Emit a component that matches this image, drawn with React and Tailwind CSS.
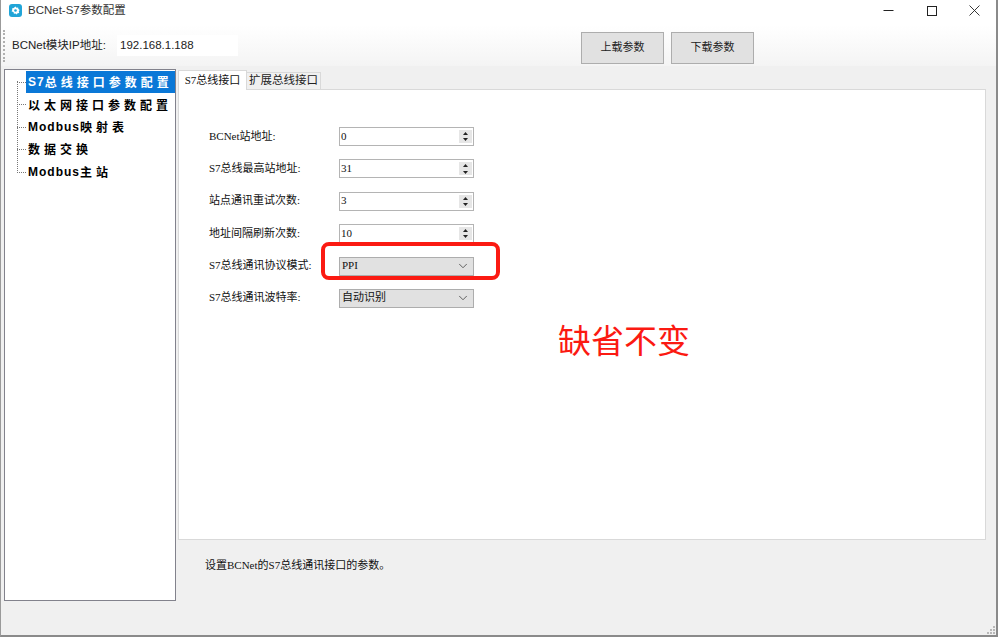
import React from "react";
import { ChevronDown } from "lucide-react";

const sans = "font-['Liberation_Sans','Noto_Sans_CJK_SC',sans-serif]";
const song = "font-['Liberation_Serif','Noto_Sans_CJK_SC',serif]";
const cjk = "font-['Noto_Sans_CJK_SC',sans-serif]";

const spinRows = [
  { label: "BCNet站地址:", value: "0" },
  { label: "S7总线最高站地址:", value: "31" },
  { label: "站点通讯重试次数:", value: "3" },
  { label: "地址间隔刷新次数:", value: "10" },
];

const selectRows = [
  { label: "S7总线通讯协议模式:", value: "PPI" },
  { label: "S7总线通讯波特率:", value: "自动识别" },
];

const treeItems = ["S7总线接口参数配置", "以太网接口参数配置", "Modbus映射表", "数据交换", "Modbus主站"];

const splitRuns = (text) => text.match(/[A-Za-z0-9]+|[^A-Za-z0-9]+/g);

const DialogText = ({ children }) => (
  <span className={`${song} block whitespace-nowrap pb-[1px] text-[11px] leading-none text-[#111]`}>{children}</span>
);

const TreeText = ({ text }) => (
  <>
    {splitRuns(text).map((run, i) =>
      /^[A-Za-z0-9]/.test(run) ? (
        <span key={i} className="font-['Liberation_Sans',sans-serif] text-[12px] tracking-[1px]">{run}</span>
      ) : (
        <span key={i} className={`${cjk} text-[12px] tracking-[4px]`}>{run}</span>
      )
    )}
  </>
);

const Arrow = ({ up }) => (
  <span className="flex h-[6.5px] w-[13px] items-center justify-center bg-[#e6e6e6]">
    <svg width="5" height="3" viewBox="0 0 5 3">
      <path d={up ? "M2.5 0L5 3H0z" : "M0 0h5L2.5 3z"} fill="#222" />
    </svg>
  </span>
);

const SpinBox = ({ value }) => (
  <div className="flex h-[19px] w-[135px] items-center justify-between border border-[#b4b4b4] bg-white pl-[1px] pr-[1px]">
    <DialogText>{value}</DialogText>
    <span className="flex flex-col">
      <Arrow up />
      <Arrow />
    </span>
  </div>
);

const SelectBox = ({ value }) => (
  <div className="flex h-[19px] w-[135px] items-center justify-between border border-[#adadad] bg-[#e1e1e1] pl-[2px] pr-[3px]">
    <DialogText>{value}</DialogText>
    <ChevronDown className="h-[14px] w-[14px] text-[#444]" strokeWidth={1.4} />
  </div>
);

const App = () => {
  return (
    <div className={`${sans} relative flex h-[638px] w-[1000px] flex-col overflow-hidden bg-white`}>
      <div className="flex h-[637px] w-[998px] flex-col border-b-2 border-r-2 border-[#8a8a8a] border-l border-l-[#9a9a9a]">
        {/* title bar */}
        <div className="flex h-[25px] shrink-0 items-center bg-white pb-[4px] pl-[8px]">
          <span className="flex h-[13px] w-[13px] items-center justify-center rounded-[3px] bg-[#21a5d8]">
            <svg width="9" height="9" viewBox="0 0 9 9">
              <path d="M4.5 0.5l1 1.3 1.6-.3.3 1.6 1.3.9-.9 1.3.4 1.6-1.6.3-1 1.3-1.1-1-1.6.3-.3-1.6L.5 5.3l.8-1.3L1 2.4l1.6-.3z" fill="#fff" />
              <circle cx="4.5" cy="4.5" r="1.3" fill="#21a5d8" />
            </svg>
          </span>
          <span className="ml-[6px] text-[11.5px] leading-none text-[#333]">BCNet-S7参数配置</span>
          <div className="ml-auto flex items-center pr-[16px]">
            <svg width="11" height="11" viewBox="0 0 11 11">
              <path d="M0.5 5.5h10" stroke="#222" />
            </svg>
            <svg className="ml-[33px]" width="10" height="10" viewBox="0 0 10 10">
              <rect x="0.5" y="0.5" width="9" height="9" fill="none" stroke="#222" />
            </svg>
            <svg className="ml-[32px]" width="11" height="11" viewBox="0 0 11 11">
              <path d="M0.5 0.5l10 10M10.5 0.5l-10 10" stroke="#222" strokeWidth="0.9" />
            </svg>
          </div>
        </div>

        {/* toolbar */}
        <div className="flex h-[41px] shrink-0 items-center bg-gradient-to-b from-white to-[#f4f4f4]">
          <div className="ml-[2px] h-[32px] w-[3px] border-l-2 border-dotted border-[#b0b0b0]" />
          <span className="ml-[6px] w-[105px] text-[11.5px] leading-none text-[#222]">BCNet模块IP地址:</span>
          <span className="flex h-[21px] w-[121px] items-center bg-white pl-[3px] text-[11.5px] text-[#222]">192.168.1.188</span>
          <button className="ml-[343px] mt-[4px] h-[32px] w-[83px] border border-[#adadad] bg-[#e1e1e1] text-[11px] text-[#222]">上载参数</button>
          <button className="ml-[7px] mt-[4px] h-[32px] w-[83px] border border-[#adadad] bg-[#e1e1e1] text-[11px] text-[#222]">下载参数</button>
        </div>

        {/* body */}
        <div className="relative flex min-h-0 flex-1 bg-[#f0f0f0] pl-[3px] pt-[3px]">
          <div className="relative h-[532px] w-[172px] shrink-0 border border-[#82828c] bg-white pl-[21px] pt-[1px]">
            {/* tree lines */}
            <div className="absolute left-[12px] top-[11px] h-[90px] border-l border-dotted border-[#777]" />
            {treeItems.map((item, i) => (
              <div key={item} className="relative flex h-[22.4px] items-center">
                <span className="absolute left-[-9px] top-[11px] w-[9px] border-t border-dotted border-[#777]" />
                <span
                  className={`flex h-[22px] w-full items-center pl-[2px] font-bold leading-none whitespace-nowrap ${
                    i === 0 ? "bg-[#0a78d7] text-white" : "text-black"
                  }`}
                >
                  <TreeText text={item} />
                </span>
              </div>
            ))}
          </div>

          <div className="ml-[2px] flex w-[808px] shrink-0 flex-col">
            {/* tabs */}
            <div className="flex h-[20px] shrink-0 items-end">
              <div className="z-10 mb-[-1px] flex h-[20px] w-[69px] items-center justify-center border-x border-t border-[#d9d9d9] bg-white">
                <DialogText>S7总线接口</DialogText>
              </div>
              <div className="flex h-[17px] w-[74px] items-center justify-center border-r border-t border-[#d9d9d9] bg-[#f0f0f0] text-[11.5px] leading-none text-[#222]">扩展总线接口</div>
            </div>

            {/* tab page */}
            <div className="h-[451px] shrink-0 border border-[#d9d9d9] bg-white pl-[30px] pt-[37px]">
              <div className="flex flex-col gap-[13.4px]">
                {spinRows.map((row) => (
                  <div key={row.label} className="flex h-[19px] items-center">
                    <span className="w-[130px]"><DialogText>{row.label}</DialogText></span>
                    <SpinBox value={row.value} />
                  </div>
                ))}
                {selectRows.map((row) => (
                  <div key={row.label} className="flex h-[19px] items-center">
                    <span className="w-[130px]"><DialogText>{row.label}</DialogText></span>
                    <SelectBox value={row.value} />
                  </div>
                ))}
              </div>
            </div>

            <div className="mt-[20px] pl-[27px]">
              <DialogText>设置BCNet的S7总线通讯接口的参数。</DialogText>
            </div>
          </div>

          {/* resize grip */}
          <svg className="absolute bottom-[1px] right-[1px]" width="8" height="8" viewBox="0 0 8 8">
            <path d="M6 0h2v2H6zM3 3h2v2H3zM6 3h2v2H6zM0 6h2v2H0zM3 6h2v2H3zM6 6h2v2H6z" fill="#b8b8b8" />
          </svg>
        </div>
      </div>

      {/* annotations on top of the shot */}
      <div className="absolute left-[321px] top-[242px] h-[38px] w-[179px] rounded-[8px] border-[4px] border-[#fb1a12]" />
      <div className="absolute left-[558px] top-[322px] text-[33px] leading-[40px] text-[#fb1a12]">缺省不变</div>
    </div>
  );
};

export default App;
